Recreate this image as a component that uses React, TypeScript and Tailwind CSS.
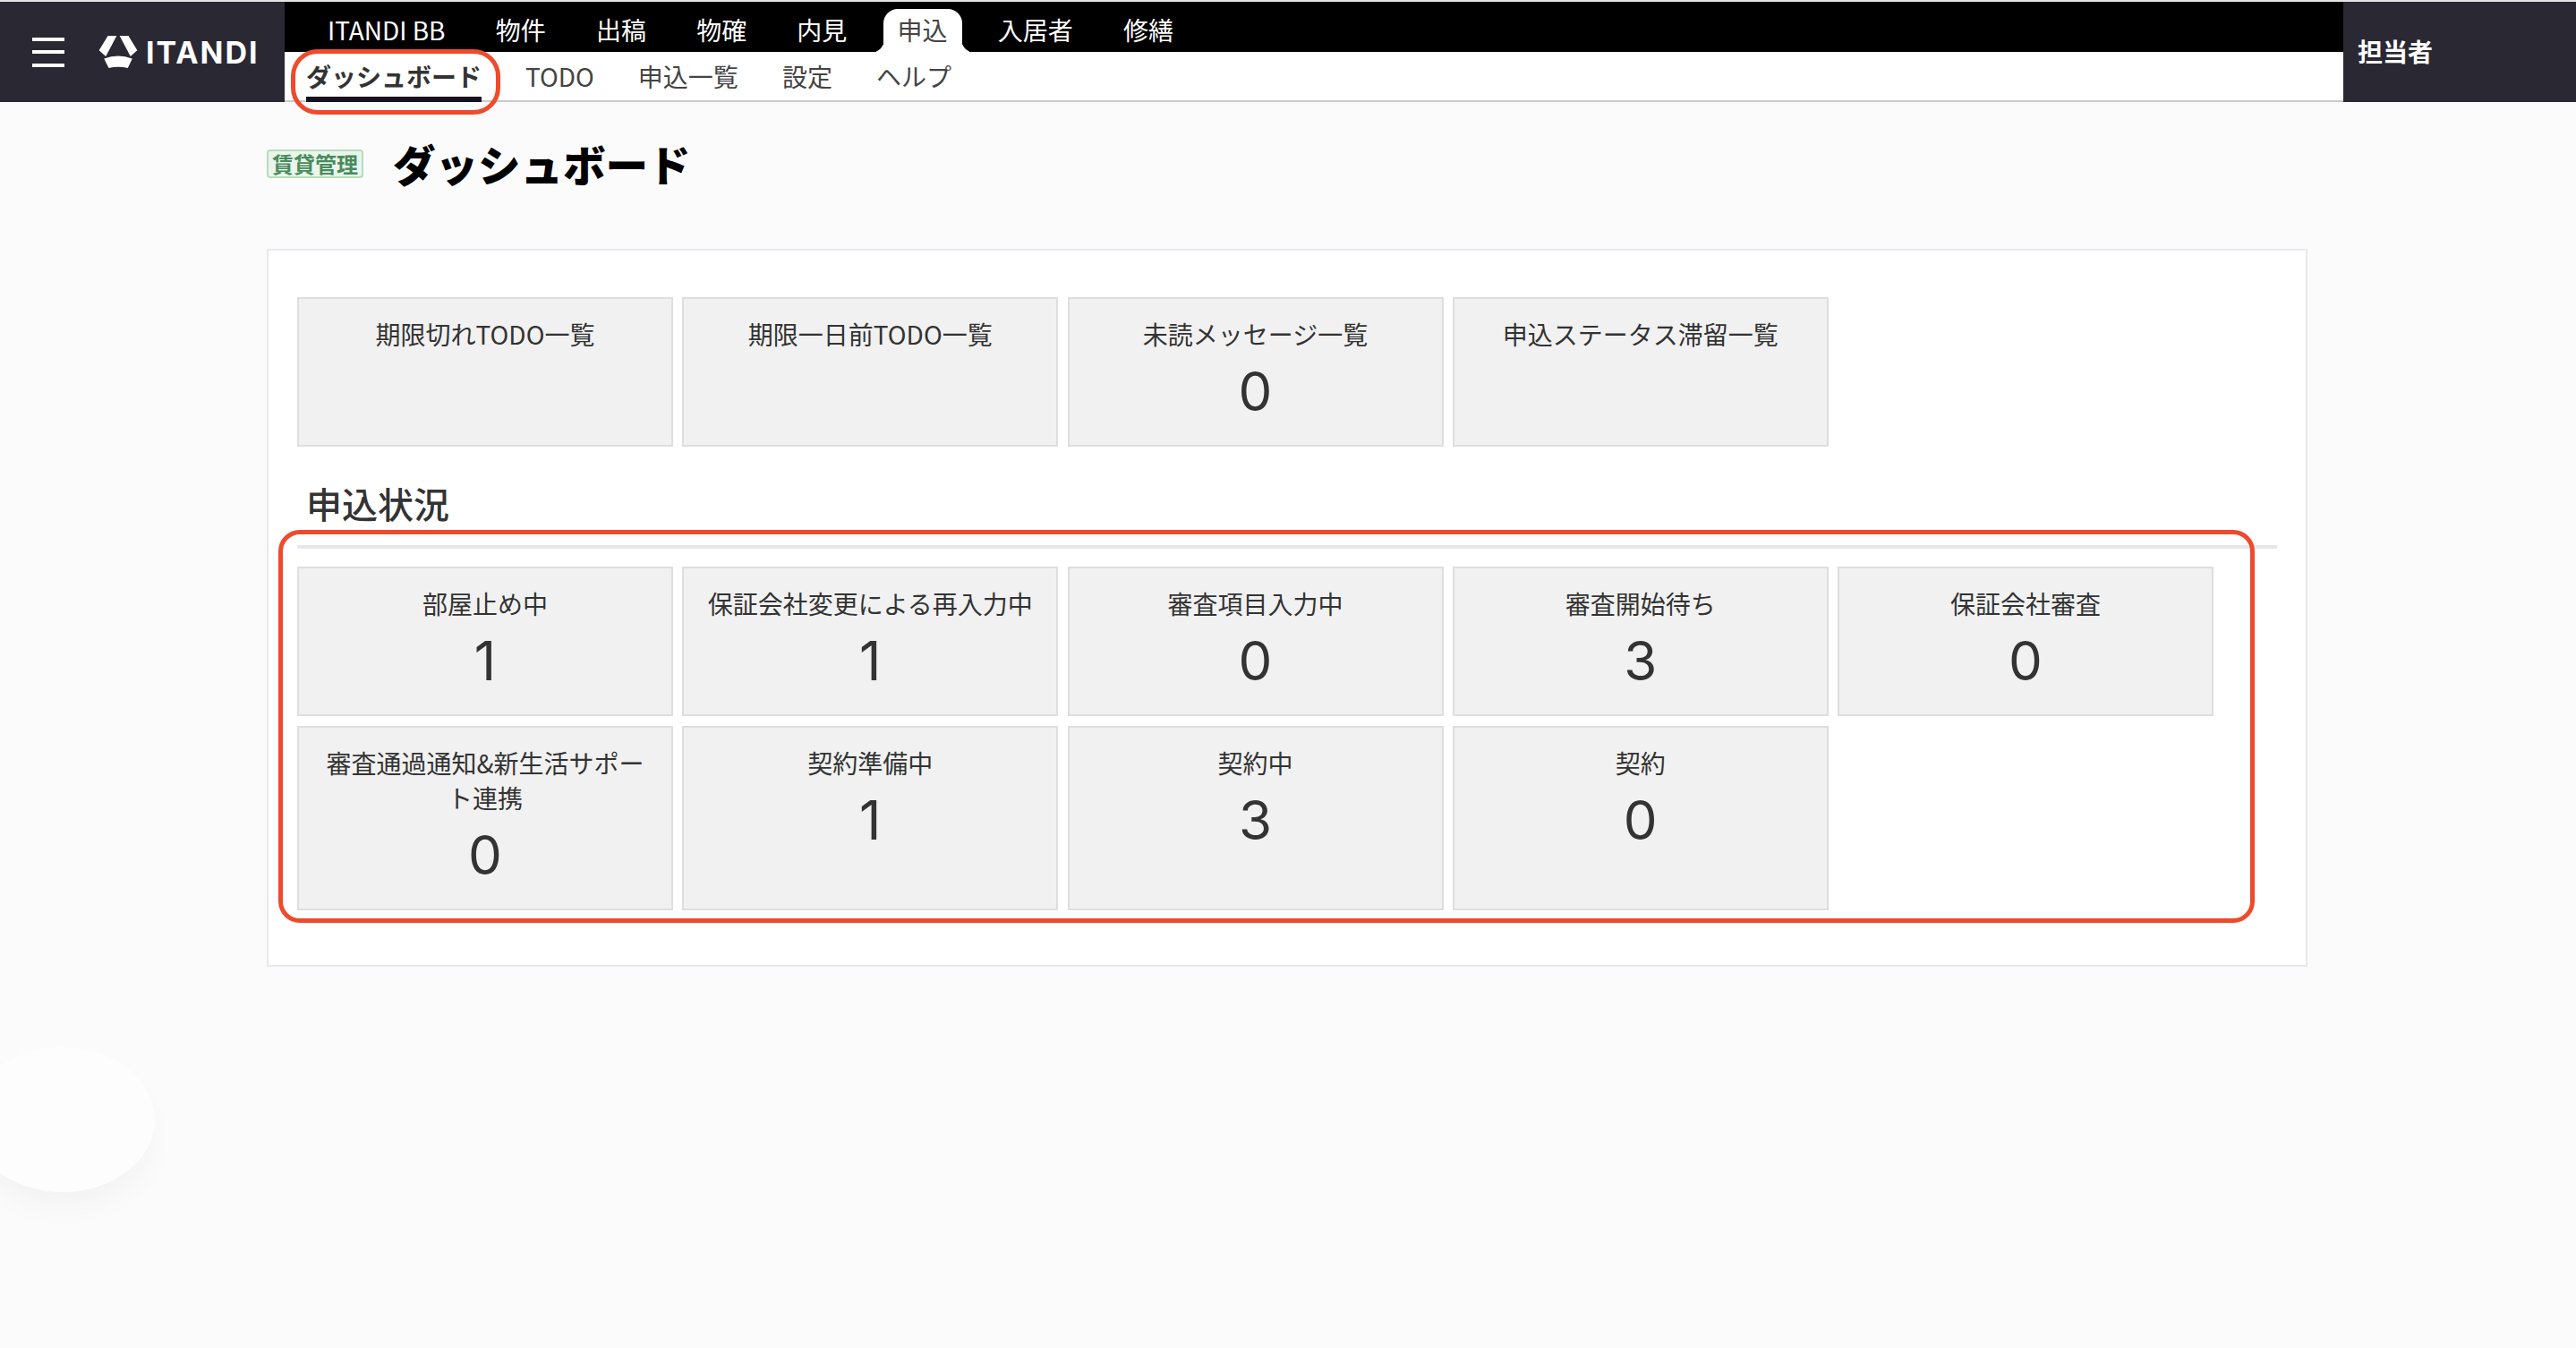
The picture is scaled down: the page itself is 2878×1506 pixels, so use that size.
import React from 'react';

const topItems = ['ITANDI BB', '物件', '出稿', '物確', '内見', '申込', '入居者', '修繕'];
const subItems = ['TODO', '申込一覧', '設定', 'ヘルプ'];

const todoTiles = [
  { label: '期限切れTODO一覧' },
  { label: '期限一日前TODO一覧' },
  { label: '未読メッセージ一覧', count: 0 },
  { label: '申込ステータス滞留一覧' },
];

const statusTiles = [
  { label: '部屋止め中', count: 1 },
  { label: '保証会社変更による再入力中', count: 1 },
  { label: '審査項目入力中', count: 0 },
  { label: '審査開始待ち', count: 3 },
  { label: '保証会社審査', count: 0 },
  { label: '審査通過通知&新生活サポート連携', count: 0 },
  { label: '契約準備中', count: 1 },
  { label: '契約中', count: 3 },
  { label: '契約', count: 0 },
];

function Logo() {
  return (
    <svg width="44" height="38" viewBox="33 26 134 114" fill="#fff">
      <path d="M65 28L95 28L58 98L35 78Z" />
      <path d="M105 28L135 28L165 78L142 98Z" />
      <path d="M52 106Q100 88 148 106L133 138Q100 130 68 138Z" />
    </svg>
  );
}

function Tile({ label, count }: { label: string; count?: number }) {
  return (
    <div className="flex w-[420px] flex-col border-2 border-[#dedede] bg-[#f1f1f1] p-5 text-center text-[#333]">
      <div className="text-[28px] leading-[39px]">{label}</div>
      <div className="h-[84px] pt-[2px] font-['Inter',sans-serif] text-[60px] leading-[84px] font-normal">{count}</div>
    </div>
  );
}

export default function App() {
  return (
    <div className="relative min-h-[1506px] overflow-hidden bg-[#fbfbfc] font-['Noto_Sans_CJK_JP','Noto_Sans',sans-serif]">
      <header className="flex h-[114px] border-t-2 border-[#e4e6e6]">
        <div className="flex w-[318px] items-center bg-[#2a2833] pl-9">
          <div className="flex w-9 flex-col gap-[10.5px]">
            <span className="h-1 bg-white" />
            <span className="h-1 bg-white" />
            <span className="h-1 bg-white" />
          </div>
          <div className="ml-[38px] flex">
            <Logo />
          </div>
          <span className="ml-[9px] font-['Inter',sans-serif] text-[34px] font-bold tracking-[2px] text-white">ITANDI</span>
        </div>
        <div className="flex flex-1 flex-col">
          <nav className="flex h-14 items-end gap-[24.2px] bg-black pl-8">
            {topItems.map((item) =>
              item === '申込' ? (
                <span key={item} className="relative flex h-12 items-center rounded-t-2xl bg-white px-4 pb-[3px] text-[28px] leading-none text-[#444]">
                  <span className="absolute -left-3 bottom-0 h-3 w-3 rounded-br-xl shadow-[4px_4px_0_#fff]" />
                  {item}
                  <span className="absolute -right-3 bottom-0 h-3 w-3 rounded-bl-xl shadow-[-4px_4px_0_#fff]" />
                </span>
              ) : (
                <span key={item} className="flex h-12 items-center px-4 pb-[3px] text-[28px] leading-none text-white">
                  {item}
                </span>
              ),
            )}
          </nav>
          <nav className="flex h-14 items-stretch gap-[49px] border-b-2 border-[#c8c8d0] bg-white pl-6 text-[28px] text-[#444]">
            <span className="-mb-[2px] flex items-center border-b-[6px] border-[#14121f] pt-1 font-bold text-[#333]">ダッシュボード</span>
            {subItems.map((item) => (
              <span key={item} className="flex items-center">
                {item}
              </span>
            ))}
          </nav>
        </div>
        <div className="flex w-[260px] items-center bg-[#2a2833] pb-[3px] pl-4 text-[28px] font-bold text-white">担当者</div>
      </header>

      <main className="mx-[298px] w-[2280px] pt-[40px]">
        <div className="flex items-center">
          <span className="flex h-8 w-[108px] items-center justify-center rounded border-2 border-[#b6dcbc] bg-[#e8f6ec] text-2xl leading-none font-bold text-[#4a8a5c]">賃貸管理</span>
          <h1 className="ml-[33px] text-[47.5px] leading-[58px] font-black text-black">ダッシュボード</h1>
        </div>

        <section className="mt-[66px] h-[802px] border-2 border-[#e8e8ee] bg-white pt-[52px] pl-8">
          <div className="flex gap-[10.25px]">
            {todoTiles.map((tile) => (
              <Tile key={tile.label} {...tile} />
            ))}
          </div>
          <h2 className="mt-[35px] ml-[10px] text-[40px] leading-[56px] font-medium text-[#333]">申込状況</h2>
          <div className="mt-[19px] mr-8 h-1 bg-[#e6e6ec]" />
          <div className="mt-5 flex w-[2200px] flex-wrap gap-x-[10.25px] gap-y-[11px]">
            {statusTiles.map((tile) => (
              <Tile key={tile.label} {...tile} />
            ))}
          </div>
        </section>
      </main>

      {/* annotation outlines */}
      <div className="absolute top-[55px] left-[325px] h-[73px] w-[234px] rounded-[30px] border-[5px] border-[#ef4a2b]" />
      <div className="absolute top-[592px] left-[311px] h-[439px] w-[2208px] rounded-[24px] border-[5px] border-[#ef4a2b]" />

      {/* floating help button */}
      <div className="absolute top-[1170px] -left-[33px] h-[162px] w-[206px] rounded-[50%] bg-[#fdfdfd] shadow-[0_20px_34px_-6px_rgba(0,0,0,0.04)]" />
    </div>
  );
}
